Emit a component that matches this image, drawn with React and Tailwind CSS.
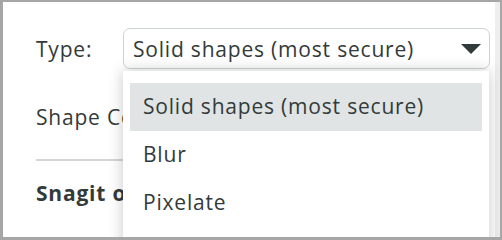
import React from 'react';

const options = ['Solid shapes (most secure)', 'Blur', 'Pixelate'];

export default function App() {
    return (
        <div className="w-[502px] h-[240px] overflow-hidden bg-white border-t-2 border-r-2 border-b-[3px] border-l-[3px] border-[#a6a6a6] font-['Open_Sans',sans-serif] text-[21px] tracking-[0.8px] leading-[28px] text-[#333a3a]">
            <div className="relative h-full">
                {/* right gutter strip */}
                <div className="absolute top-0 right-0 w-[5px] h-full bg-[#eeeeee]" />

                <div className="pl-[33px] pt-[26px]">
                    {/* Type row */}
                    <div className="flex items-center">
                        <span className="w-[87px]">Type:</span>
                        <div className="relative w-[367px]">
                            <div className="flex items-center justify-between h-[41px] pl-[9px] pr-[8px] border border-[#cdd2d2] rounded-[7px] bg-white">
                                <span>Solid shapes (most secure)</span>
                                <svg width="20" height="10" viewBox="0 0 20 10" className="text-[#333a3a]">
                                    <path d="M0 0h20L10 10z" fill="currentColor" />
                                </svg>
                            </div>

                            {/* open menu */}
                            <div className="absolute z-10 left-0 top-[43px] w-[366px] h-[200px] bg-white pt-[12px] px-[7px] shadow-[0_0_14px_rgba(0,0,0,0.22)]">
                                {options.map((opt, i) => (
                                    <div
                                        key={opt}
                                        className={`flex items-center h-[48px] pl-[13px] pb-[3px] ${i === 0 ? 'bg-[#e0e4e4]' : ''}`}
                                    >
                                        {opt}
                                    </div>
                                ))}
                            </div>
                        </div>
                    </div>

                    {/* rows partly hidden behind the menu */}
                    <div className="mt-[34px] h-[28px] whitespace-nowrap">Shape Color</div>

                    <div className="mt-[28px] w-[300px] h-[2px] bg-[#d4d6d6]" />

                    <div className="mt-[18px] whitespace-nowrap font-bold">Snagit options</div>
                </div>
            </div>
        </div>
    );
}
